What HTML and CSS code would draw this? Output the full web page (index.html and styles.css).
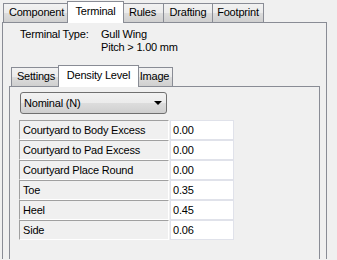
FILE: index.html
```html
<!DOCTYPE html>
<html lang="en">
<head>
    <meta charset="UTF-8">
    <title>Terminal</title>
    <link rel="stylesheet" href="styles.css">
</head>
<body>
    <div class="window">
        <div class="tabs">
            <div class="tab w-component">Component</div>
            <div class="tab active w-terminal">Terminal</div>
            <div class="tab w-rules">Rules</div>
            <div class="tab w-drafting">Drafting</div>
            <div class="tab w-footprint">Footprint</div>
        </div>
        <div class="panel outer">
            <div class="info">
                <div class="info-label">Terminal Type:</div>
                <div class="info-value">Gull Wing<br>Pitch &gt; 1.00 mm</div>
            </div>

            <div class="inner">
                <div class="tabs">
                    <div class="tab w-settings">Settings</div>
                    <div class="tab active w-density">Density Level</div>
                    <div class="tab w-image">Image</div>
                </div>
                <div class="panel inner-panel">
                    <div class="select">
                        <span>Nominal (N)</span>
                        <span class="arrow"></span>
                    </div>
                    <div class="grid">
                        <div class="cell-label">Courtyard to Body Excess</div>
                        <div class="cell-value">0.00</div>
                        <div class="cell-label">Courtyard to Pad Excess</div>
                        <div class="cell-value">0.00</div>
                        <div class="cell-label">Courtyard Place Round</div>
                        <div class="cell-value">0.00</div>
                        <div class="cell-label">Toe</div>
                        <div class="cell-value">0.35</div>
                        <div class="cell-label">Heel</div>
                        <div class="cell-value">0.45</div>
                        <div class="cell-label">Side</div>
                        <div class="cell-value">0.06</div>
                    </div>
                </div>
            </div>
        </div>
    </div>
</body>
</html>
```

FILE: styles.css
```css
body {
    margin: 0;
    background: #f0f0f0;
    font-family: 'Liberation Sans', Arial, sans-serif;
    font-size: 11px;
    letter-spacing: -0.2px;
    color: #000;
    overflow: hidden;
    height: 260px;
}
.window {
    width: 325px;
    padding: 1px 0 0 2px;
}
.tabs {
    display: flex;
    align-items: flex-end;
    height: 22px;
    padding-left: 1px;
    margin-bottom: -1px;
    position: relative;
    z-index: 1;
}
.tab {
    box-sizing: border-box;
    height: 20px;
    border: 1px solid #898c95;
    margin-right: -1px;
    text-align: center;
    line-height: 17px;
    background: linear-gradient(#f2f2f2, #ebebeb 50%, #dddddd 50%, #cfcfcf);
}
.tab.active {
    height: 22px;
    border-bottom: none;
    background: #fff;
    margin-left: -2px;
    margin-right: -3px;
    line-height: 19px;
    position: relative;
    z-index: 2;
}
.w-component { width: 67px; }
.w-terminal { width: 57px; }
.w-rules { width: 43px; }
.w-drafting { width: 50px; }
.w-footprint { width: 52px; }
.w-settings { width: 50px; }
.w-density { width: 81px; }
.w-image { width: 37px; }

.panel {
    box-sizing: border-box;
    border: 1px solid #898c95;
    border-bottom: none;
    background: #f0f0f0;
}
.outer {
    height: 237px;
    padding: 5px 6px 0 6px;
}
.info {
    display: flex;
    line-height: 13px;
    padding-left: 11px;
}
.info-label {
    width: 81px;
}
.inner {
    margin-top: 11px;
}
.inner .tabs {
    padding-left: 2px;
}
.inner-panel {
    width: 311px;
    height: 173px;
    padding: 5px 0 0 10px;
}
.select {
    box-sizing: border-box;
    width: 147px;
    height: 22px;
    border: 1px solid #707070;
    border-radius: 3px;
    background: linear-gradient(#f2f2f2, #ebebeb 50%, #dddddd 50%, #cfcfcf);
    display: flex;
    align-items: center;
    justify-content: space-between;
    padding: 0 4px 0 3px;
}
.arrow {
    width: 0;
    height: 0;
    border-left: 4px solid transparent;
    border-right: 4px solid transparent;
    border-top: 4px solid #000;
}
.grid {
    display: grid;
    grid-template-columns: 150px 65px;
    grid-auto-rows: 20px;
    margin: 6px 0 0 -1px;
}
.cell-label {
    box-sizing: border-box;
    border-top: 1px solid #a0a0a0;
    border-left: 1px solid #a0a0a0;
    border-bottom: 1px solid #fff;
    border-right: 1px solid #fff;
    padding-left: 3px;
    line-height: 18px;
}
.cell-value {
    box-sizing: border-box;
    background: #fff;
    border: 1px solid #e0e2ea;
    margin-left: 1px;
    padding-left: 2px;
    line-height: 18px;
}
```
